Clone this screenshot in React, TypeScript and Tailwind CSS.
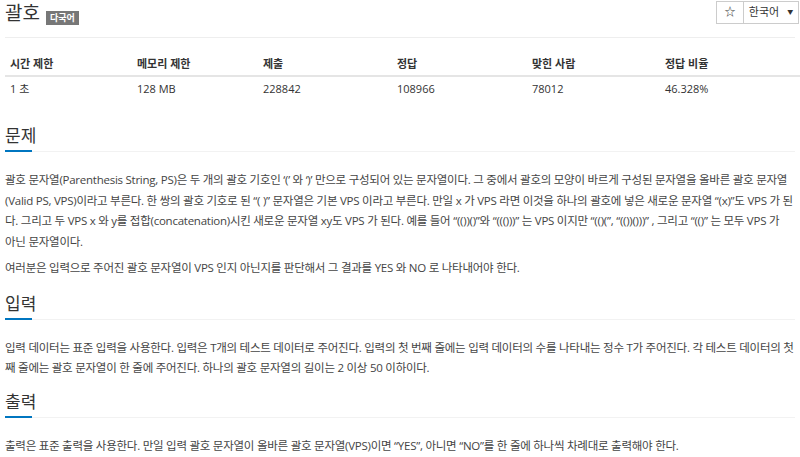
import React from 'react';

const font = "font-['Open_Sans','Noto_Sans_CJK_KR',sans-serif]";

const stats = [
  { label: '시간 제한', value: '1 초', w: 'w-[127px]' },
  { label: '메모리 제한', value: '128 MB', w: 'w-[126px]' },
  { label: '제출', value: '228842', w: 'w-[134px]' },
  { label: '정답', value: '108966', w: 'w-[135px]' },
  { label: '맞힌 사람', value: '78012', w: 'w-[133px]' },
  { label: '정답 비율', value: '46.328%', w: '' },
];

const SectionTitle: React.FC<{ title: string }> = ({ title }) => (
  <div className="relative border-b border-[#f2f2f2] pb-[2px]">
    <h2 className="text-[17px] leading-[26px] text-[#333]">{title}</h2>
    <div className="absolute left-0 bottom-[-1px] h-[2px] w-[27px] bg-[#0076c0]"></div>
  </div>
);

const body = 'mt-[18px] text-[11.5px] leading-[20.7px] tracking-[-0.25px] text-[#444]';

const App: React.FC = () => {
  return (
    <div className={`${font} w-[800px] h-[457px] overflow-hidden bg-white px-[5px] text-[#333]`}>
      <div className="flex items-start justify-between h-[38px] border-b border-[#eee]">
        <div className="flex items-end gap-[6px] pt-[1px]">
          <h1 className="text-[19px] leading-[24px] text-[#333]">괄호</h1>
          <span className="bg-[#777] px-[4px] text-[9px] leading-[14px] font-bold text-white">다국어</span>
        </div>
        <div className="flex h-[23px] mt-[1px] -mr-[4px] border border-[#ccc] text-[11px] text-[#333]">
          <button className="w-[27px] border-r border-[#ccc] flex items-center justify-center text-[11px]">☆</button>
          <button className="w-[54px] flex items-center justify-center gap-[8px]">
            한국어
            <span className="text-[6px]">▼</span>
          </button>
        </div>
      </div>

      <table className="mt-[16px] w-[795px] table-fixed text-[11px]">
        <thead>
          <tr className="border-b-2 border-[#e5e5e5]">
            {stats.map(s => (
              <th key={s.label} className={`${s.w} px-[5px] h-[22px] text-left font-bold align-middle`}>{s.label}</th>
            ))}
          </tr>
        </thead>
        <tbody>
          <tr>
            {stats.map(s => (
              <td key={s.label} className="px-[5px] h-[25px] align-middle">{s.value}</td>
            ))}
          </tr>
        </tbody>
      </table>

      <div className="mt-[22px]">
        <SectionTitle title="문제" />
        <div className={body}>
          <p>
            괄호 문자열(Parenthesis String, PS)은 두 개의 괄호 기호인 ‘(’ 와 ‘)’ 만으로 구성되어 있는 문자열이다. 그 중에서 괄호의 모양이 바르게 구성된 문자열을 올바른 괄호 문자열(Valid PS, VPS)이라고 부른다. 한 쌍의 괄호 기호로 된 “( )” 문자열은 기본 VPS 이라고 부른다. 만일 x 가 VPS 라면 이것을 하나의 괄호에 넣은 새로운 문자열 “(x)”도 VPS 가 된다. 그리고 두 VPS x 와 y를 접합(concatenation)시킨 새로운 문자열 xy도 VPS 가 된다. 예를 들어 “(())()”와 “((()))” 는 VPS 이지만 “(()(”, “(())()))” , 그리고 “(()” 는 모두 VPS 가 <span className="whitespace-nowrap">아닌</span> 문자열이다.
          </p>
          <p className="mt-[5px]">
            여러분은 입력으로 주어진 괄호 문자열이 VPS 인지 아닌지를 판단해서 그 결과를 YES 와 NO 로 나타내어야 한다.
          </p>
        </div>
      </div>

      <div className="mt-[12px]">
        <SectionTitle title="입력" />
        <div className={body}>
          <p>
            입력 데이터는 표준 입력을 사용한다. 입력은 T개의 테스트 데이터로 주어진다. 입력의 첫 번째 줄에는 입력 데이터의 수를 나타내는 정수 T가 주어진다. 각 테스트 데이터의 첫째 줄에는 괄호 문자열이 한 줄에 주어진다. 하나의 괄호 문자열의 길이는 2 이상 50 이하이다.
          </p>
        </div>
      </div>

      <div className="mt-[10px]">
        <SectionTitle title="출력" />
        <div className={body}>
          <p>
            출력은 표준 출력을 사용한다. 만일 입력 괄호 문자열이 올바른 괄호 문자열(VPS)이면 “YES”, 아니면 “NO”를 한 줄에 하나씩 차례대로 출력해야 한다.
          </p>
        </div>
      </div>
    </div>
  );
};

export default App;
